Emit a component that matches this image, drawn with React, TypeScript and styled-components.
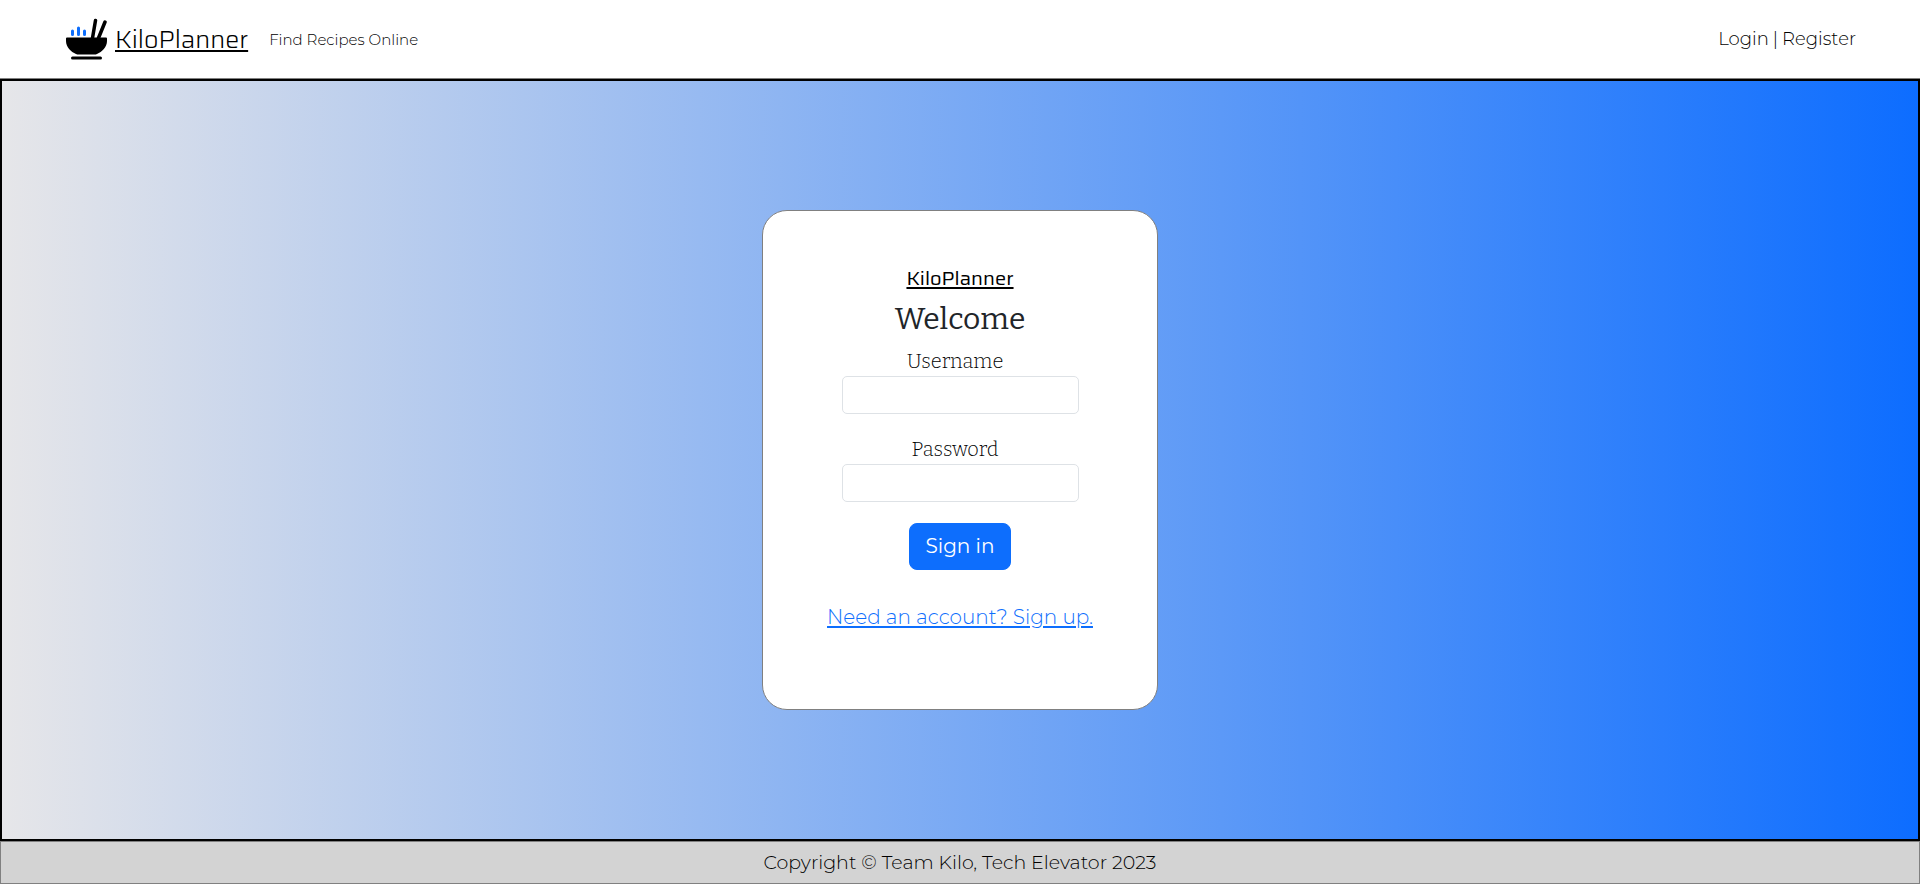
import React from "react";
import styled, { createGlobalStyle } from "styled-components";

const sans = `Montserrat, "Open Sans", "Noto Sans", sans-serif`;
const serif = `Bitter, "Noto Serif", "DejaVu Serif", "Liberation Serif", serif`;
const brandFont = `Saira, Roboto, "Liberation Sans", sans-serif`;

const GlobalStyle = createGlobalStyle`
  *, *::before, *::after { box-sizing: border-box; }
  body { margin: 0; background: #fff; color: #212529; font-family: ${sans}; font-weight: 300; }
`;

const Page = styled.div`
  display: flex;
  flex-direction: column;
  min-height: 100vh;
`;

const Header = styled.header`
  display: flex;
  align-items: center;
  justify-content: space-between;
  min-height: 79px;
  padding: 0 64px;
  border-bottom: 1px solid gray;
`;

const Nav = styled.nav`
  display: flex;
  align-items: center;
`;

const HomeLink = styled.a`
  display: flex;
  align-items: center;
  gap: 8px;
  margin-right: 21px;
  color: #000;
  font-family: ${brandFont};
  font-size: 25px;
  text-decoration-thickness: 2px;
  text-underline-offset: 2px;
`;

const NavLink = styled.a<{ $size: number }>`
  color: #000;
  font-size: ${(p) => p.$size}px;
  text-decoration: none;
`;

const Account = styled(Nav)`
  gap: 4px;
  font-size: 18px;
  color: #000;
`;

const Main = styled.main`
  display: flex;
  flex: 1;
  align-items: center;
  justify-content: center;
  padding: 32px;
  border: 2px solid #000;
  background: linear-gradient(90deg, #e6e6e9, #0d6dff);
`;

const Card = styled.form`
  display: flex;
  flex-direction: column;
  align-items: center;
  width: 396px;
  padding: 53px 32px 77px;
  border: 1px solid gray;
  border-radius: 25px;
  background: #fff;
`;

const CardBrand = styled.h2`
  margin: 0 0 8px;
  color: #000;
  font-family: ${brandFont};
  font-size: 20px;
  line-height: 28px;
  font-weight: 400;
  text-decoration: underline;
  text-decoration-thickness: 2px;
  text-underline-offset: 2px;
`;

const Title = styled.h1`
  margin: 0 0 8px;
  font-family: ${serif};
  font-size: 30px;
  line-height: 38px;
  font-weight: 400;
`;

const Field = styled.div`
  display: flex;
  flex-direction: column;
  align-items: center;
  margin-bottom: 20px;
`;

const Label = styled.label`
  margin-right: 10px;
  color: #000;
  font-family: ${serif};
  font-size: 20px;
  line-height: 30px;
`;

const Input = styled.input`
  width: 237px;
  height: 38px;
  padding: 6px 12px;
  border: 1px solid #dee2e6;
  border-radius: 5px;
  background: #fff;
  font: inherit;
`;

const SignIn = styled.button`
  margin: 1px 0 32px;
  padding: 8px 15px;
  border: 1px solid #0d6efd;
  border-radius: 8px;
  background: #0d6efd;
  color: #fff;
  font-family: ${sans};
  font-size: 20px;
  line-height: 29px;
`;

const SignUp = styled.a`
  color: #0d6efd;
  font-size: 20px;
  line-height: 30px;
  text-decoration-thickness: 2px;
  text-underline-offset: 2px;
`;

const Footer = styled.footer`
  display: flex;
  align-items: center;
  justify-content: center;
  min-height: 43px;
  border: 1px solid gray;
  background: #d3d3d3;
  color: #000;
  font-size: 19px;
`;

const BowlIcon = () => (
  <svg width="43" height="43" viewBox="0 0 43 43" aria-hidden="true">
    <path d="M3 19.500H42Q43 19.500 43 20.500V23C43 29 38 34 33 36Q32 36.500 30 36.500H15Q13 36.500 12 36C7 34 2 29 2 23V20.500Q2 19.500 3 19.500Z" fill="#000" />
    <path d="M8.500 40H36.500" stroke="#000" strokeWidth="3" strokeLinecap="round" />
    <path d="M28.500 20L31.500 2.500M34.500 20L41 4" stroke="#000" strokeWidth="3.500" strokeLinecap="round" />
    <path d="M8.500 13V16.500M14.500 10V16.500M20.500 13V16.500" stroke="#0d6efd" strokeWidth="3" strokeLinecap="round" />
  </svg>
);

export default function App() {
  return (
    <Page>
      <GlobalStyle />
      <Header>
        <Nav>
          <HomeLink href="#"><BowlIcon />KiloPlanner</HomeLink>
          <NavLink href="#recipes" $size={15}>Find Recipes Online</NavLink>
        </Nav>
        <Account>
          <NavLink href="#login" $size={18}>Login</NavLink>|
          <NavLink href="#register" $size={18}>Register</NavLink>
        </Account>
      </Header>
      <Main>
        <Card>
          <CardBrand>KiloPlanner</CardBrand>
          <Title>Welcome</Title>
          <Field>
            <Label htmlFor="username">Username</Label>
            <Input id="username" type="text" />
          </Field>
          <Field>
            <Label htmlFor="password">Password</Label>
            <Input id="password" type="password" />
          </Field>
          <SignIn type="button">Sign in</SignIn>
          <SignUp href="#register">Need an account? Sign up.</SignUp>
        </Card>
      </Main>
      <Footer>Copyright © Team Kilo, Tech Elevator 2023</Footer>
    </Page>
  );
}
